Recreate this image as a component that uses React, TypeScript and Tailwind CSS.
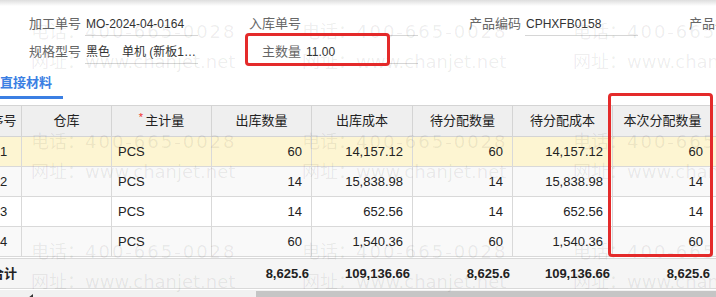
import React from "react";

const cols = [36, 90, 100, 100, 101, 100, 100, 100, 60];
const headers = ["序号", "仓库", "主计量", "出库数量", "出库成本", "待分配数量", "待分配成本", "本次分配数量", ""];

const rows = [
  ["1", "", "PCS", "60", "14,157.12", "60", "14,157.12", "60"],
  ["2", "", "PCS", "14", "15,838.98", "14", "15,838.98", "14"],
  ["3", "", "PCS", "14", "652.56", "14", "652.56", "14"],
  ["4", "", "PCS", "60", "1,540.36", "60", "1,540.36", "60"],
];

const totals = ["合计", "", "", "8,625.6", "109,136.66", "8,625.6", "109,136.66", "8,625.6", ""];

const rowBg = ["bg-[#fdf5d2]", "bg-[#f9f9f9]", "bg-white", "bg-[#f9f9f9]"];

function Field({ label, value }: { label: string; value?: string }) {
  return (
    <div className="flex w-[220px] shrink-0 items-stretch">
      <div className="w-[52px] shrink-0 text-right text-[13px] leading-[22px] text-[#666] whitespace-nowrap">{label}</div>
      <div className="ml-[4px] h-[23px] w-[113px] shrink-0 overflow-hidden text-ellipsis whitespace-nowrap border-b border-[#d6d6d6] pl-[1px] text-[12px] leading-[22px] text-[#333]">
        {value}
      </div>
    </div>
  );
}

function Watermark({ x, y }: { x: number; y: number }) {
  return (
    <>
      <div className="absolute whitespace-nowrap text-[18px] leading-[18px]" style={{ left: x, top: y }}>
        <span className="font-['Noto_Sans_CJK_SC',sans-serif]">电话：</span>
        <span className="font-['DejaVu_Sans',sans-serif] tracking-[2px]">400-665-0028</span>
      </div>
      <div className="absolute whitespace-nowrap text-[18px] leading-[18px]" style={{ left: x, top: y + 30 }}>
        <span className="font-['Noto_Sans_CJK_SC',sans-serif]">网址：</span>
        <span className="font-['DejaVu_Sans',sans-serif]">www.chanjet.net</span>
      </div>
    </>
  );
}

export default function App() {
  const wmX = [31, 302, 573];
  const wmY = [21, 131, 241];
  return (
    <div className="relative h-[297px] w-[716px] overflow-hidden bg-white font-['Liberation_Sans','Noto_Sans_CJK_SC',sans-serif] text-[#222]">
      <div className="h-[6px] bg-gradient-to-b from-[#dedede] to-white" />

      {/* form */}
      <div className="flex flex-col gap-[5px] pl-[29px] pt-[7px]">
        <div className="flex">
          <Field label="加工单号" value="MO-2024-04-0164" />
          <Field label="入库单号" value="" />
          <Field label="产品编码" value="CPHXFB0158" />
          <Field label="产品名称" value="" />
        </div>
        <div className="flex">
          <Field label="规格型号" value="黑色　单机 (新板12寸主板)" />
          <Field label="主数量" value="11.00" />
        </div>
      </div>

      {/* tab */}
      <div className="mt-[9px] flex">
        <div className="border-b-[3px] border-[#3b7fe3] pb-[3px] pr-[11px] text-[13px] font-bold leading-[20px] text-[#3b7fe3]">
          直接材料
        </div>
      </div>

      {/* table */}
      <div className="mt-[6px] overflow-hidden">
        <div className="ml-[-14px] w-[800px] text-[13px]">
          <div className="flex h-[30px] border-y border-[#d4d4d4] bg-[#efefef] box-content">
            {headers.map((h, i) => (
              <div
                key={i}
                style={{ width: cols[i] }}
                className="flex shrink-0 items-center justify-center border-r border-[#d4d4d4] whitespace-nowrap text-[#222]"
              >
                {i === 2 && <span className="mr-[2px] self-start pt-[6px] text-[11px] leading-[11px] text-[#f0302c]">*</span>}
                {h}
              </div>
            ))}
          </div>
          {rows.map((r, ri) => (
            <div key={ri} className={`flex h-[30px] border-b border-[#d9d9d9] ${rowBg[ri]}`}>
              {cols.map((w, ci) => {
                const v = r[ci] ?? "";
                const align =
                  ci === 0 ? "justify-center" : ci === 1 || ci === 2 ? "justify-start pl-[6px]" : "justify-end pr-[9px]";
                return (
                  <div
                    key={ci}
                    style={{ width: w }}
                    className={`flex shrink-0 items-center border-r border-[#d9d9d9] whitespace-nowrap ${align}`}
                  >
                    {v}
                  </div>
                );
              })}
            </div>
          ))}
          <div className="mt-[1px] flex h-[31px] border-y border-[#d9d9d9] bg-[#f5f5f5] font-bold">
            {cols.map((w, ci) => (
              <div
                key={ci}
                style={{ width: w }}
                className={`flex shrink-0 items-center whitespace-nowrap ${ci === 0 ? "justify-center" : "justify-end pr-[3px]"} ${ci > 0 ? "border-l border-transparent" : ""}`}
              >
                {totals[ci]}
              </div>
            ))}
          </div>
        </div>
      </div>

      {/* scrollbar */}
      <div className="relative mt-[1px] flex h-[12px] bg-[#f1f1f1]">
        <div className="flex w-[256px] items-end pl-[28px]">
          <svg width="6" height="8" viewBox="0 0 6 8" className="mt-[5px]">
            <path d="M5 0 L0 4 L5 8 Z" fill="#333" />
          </svg>
        </div>
        <div className="mt-[1px] flex-1 bg-[#c5c5c5]" />
      </div>

      {/* watermark overlay */}
      <div className="pointer-events-none absolute inset-0 text-[rgba(0,0,0,0.07)]">
        {wmX.map((x) => wmY.map((y) => <Watermark key={`${x}-${y}`} x={x} y={y} />))}
      </div>

      {/* red annotation boxes */}
      <div className="pointer-events-none absolute left-[245px] top-[33px] h-[33px] w-[145px] rounded-[4px] border-[3px] border-[#e42a2a]" />
      <div className="pointer-events-none absolute left-[608px] top-[93px] h-[164px] w-[105px] rounded-[4px] border-[3px] border-[#e42a2a]" />
    </div>
  );
}
